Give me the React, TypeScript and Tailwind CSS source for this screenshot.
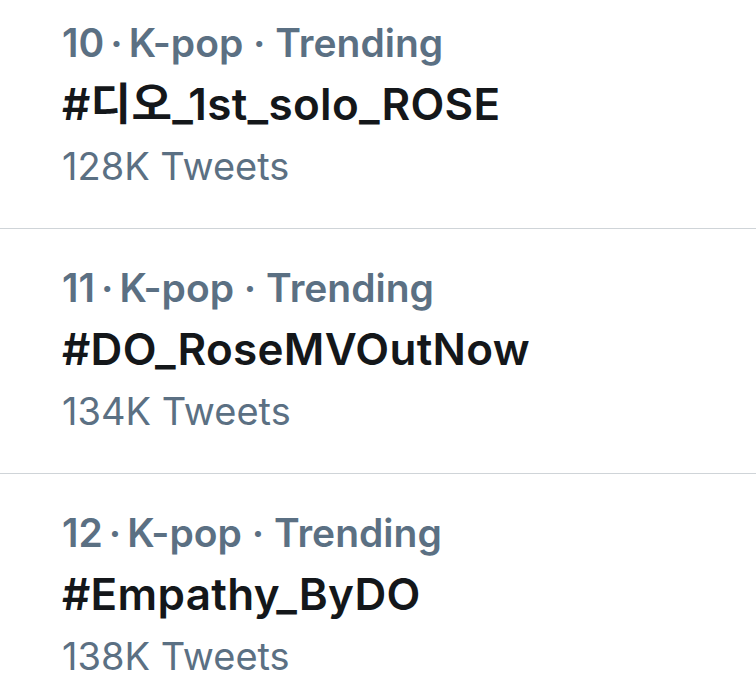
const TRENDS = [
  { rank: 10, category: "K-pop", tag: "#디오_1st_solo_ROSE", count: "128K" },
  { rank: 11, category: "K-pop", tag: "#DO_RoseMVOutNow", count: "134K" },
  { rank: 12, category: "K-pop", tag: "#Empathy_ByDO", count: "138K" },
];

export default function App() {
  return (
    <div
      className="w-[756px] h-[693px] overflow-hidden bg-white"
      style={{ fontFamily: 'Inter, "Noto Sans CJK KR", sans-serif' }}
    >
      {TRENDS.map((t) => (
        <div
          key={t.rank}
          className="border-b border-[#cfd4d8] pl-[62px] pt-[29px] pb-[32px] first:pt-[13px]"
        >
          <div className="text-[39px] leading-[60px] font-semibold text-[#5b7083]">
            {t.rank}
            <span className="mx-[6px]">·</span>
            {t.category} · Trending
          </div>
          <div className="mt-[1px] text-[44px] leading-[60px] font-semibold text-[#14171a] tracking-[0.3px]">
            {t.tag}
          </div>
          <div className="mt-[2px] text-[38px] leading-[60px] text-[#5b7083]">
            {t.count} Tweets
          </div>
        </div>
      ))}
    </div>
  );
}
